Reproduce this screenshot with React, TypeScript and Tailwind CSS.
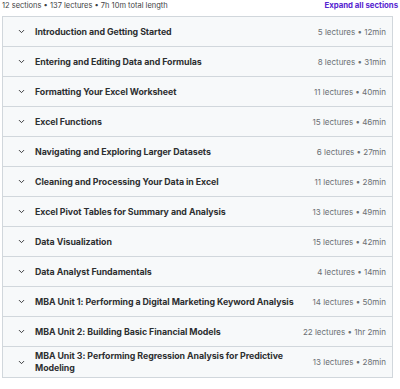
import { ChevronDown } from 'lucide-react';

type Section = {
  title: string;
  meta: string;
};

const sections: Section[] = [
  { title: 'Introduction and Getting Started', meta: '5 lectures • 12min' },
  { title: 'Entering and Editing Data and Formulas', meta: '8 lectures • 31min' },
  { title: 'Formatting Your Excel Worksheet', meta: '11 lectures • 40min' },
  { title: 'Excel Functions', meta: '15 lectures • 46min' },
  { title: 'Navigating and Exploring Larger Datasets', meta: '6 lectures • 27min' },
  { title: 'Cleaning and Processing Your Data in Excel', meta: '11 lectures • 28min' },
  { title: 'Excel Pivot Tables for Summary and Analysis', meta: '13 lectures • 49min' },
  { title: 'Data Visualization', meta: '15 lectures • 42min' },
  { title: 'Data Analyst Fundamentals', meta: '4 lectures • 14min' },
  { title: 'MBA Unit 1: Performing a Digital Marketing Keyword Analysis', meta: '14 lectures • 50min' },
  { title: 'MBA Unit 2: Building Basic Financial Models', meta: '22 lectures • 1hr 2min' },
  { title: 'MBA Unit 3: Performing Regression Analysis for Predictive Modeling', meta: '13 lectures • 28min' },
];

const SectionRow = ({ section }: { section: Section }) => (
  <div className="flex min-h-[30px] items-center border-b border-[#d1d7dc] last:border-b-0 bg-[#f7f9fa] py-[3px] pl-[14px] pr-[6px]">
    <ChevronDown className="mr-[9px] h-[9px] w-[9px] shrink-0 text-[#2d2f31]" strokeWidth={2.5} />
    <div className="flex-1 pr-[10px] text-[8.8px] font-bold leading-[12px] tracking-[-0.05px] text-[#2d2f31]">
      {section.title}
    </div>
    <div className="shrink-0 text-[8px] text-[#6a6f73]">{section.meta}</div>
  </div>
);

export default function App() {
  return (
    <div className="h-[389px] w-[400px] overflow-hidden bg-white font-['Inter',sans-serif]">
      <div className="flex h-[12px] items-center justify-between px-[2px]">
        <span className="text-[7.5px] text-[#3e4143]">12 sections • 137 lectures • 7h 10m total length</span>
        <span className="text-[7.8px] font-bold text-[#5624d0]">Expand all sections</span>
      </div>
      <div className="ml-[2px] mt-[4px] w-[391px] border border-[#d1d7dc]">
        {sections.map((section) => (
          <SectionRow key={section.title} section={section} />
        ))}
      </div>
    </div>
  );
}
